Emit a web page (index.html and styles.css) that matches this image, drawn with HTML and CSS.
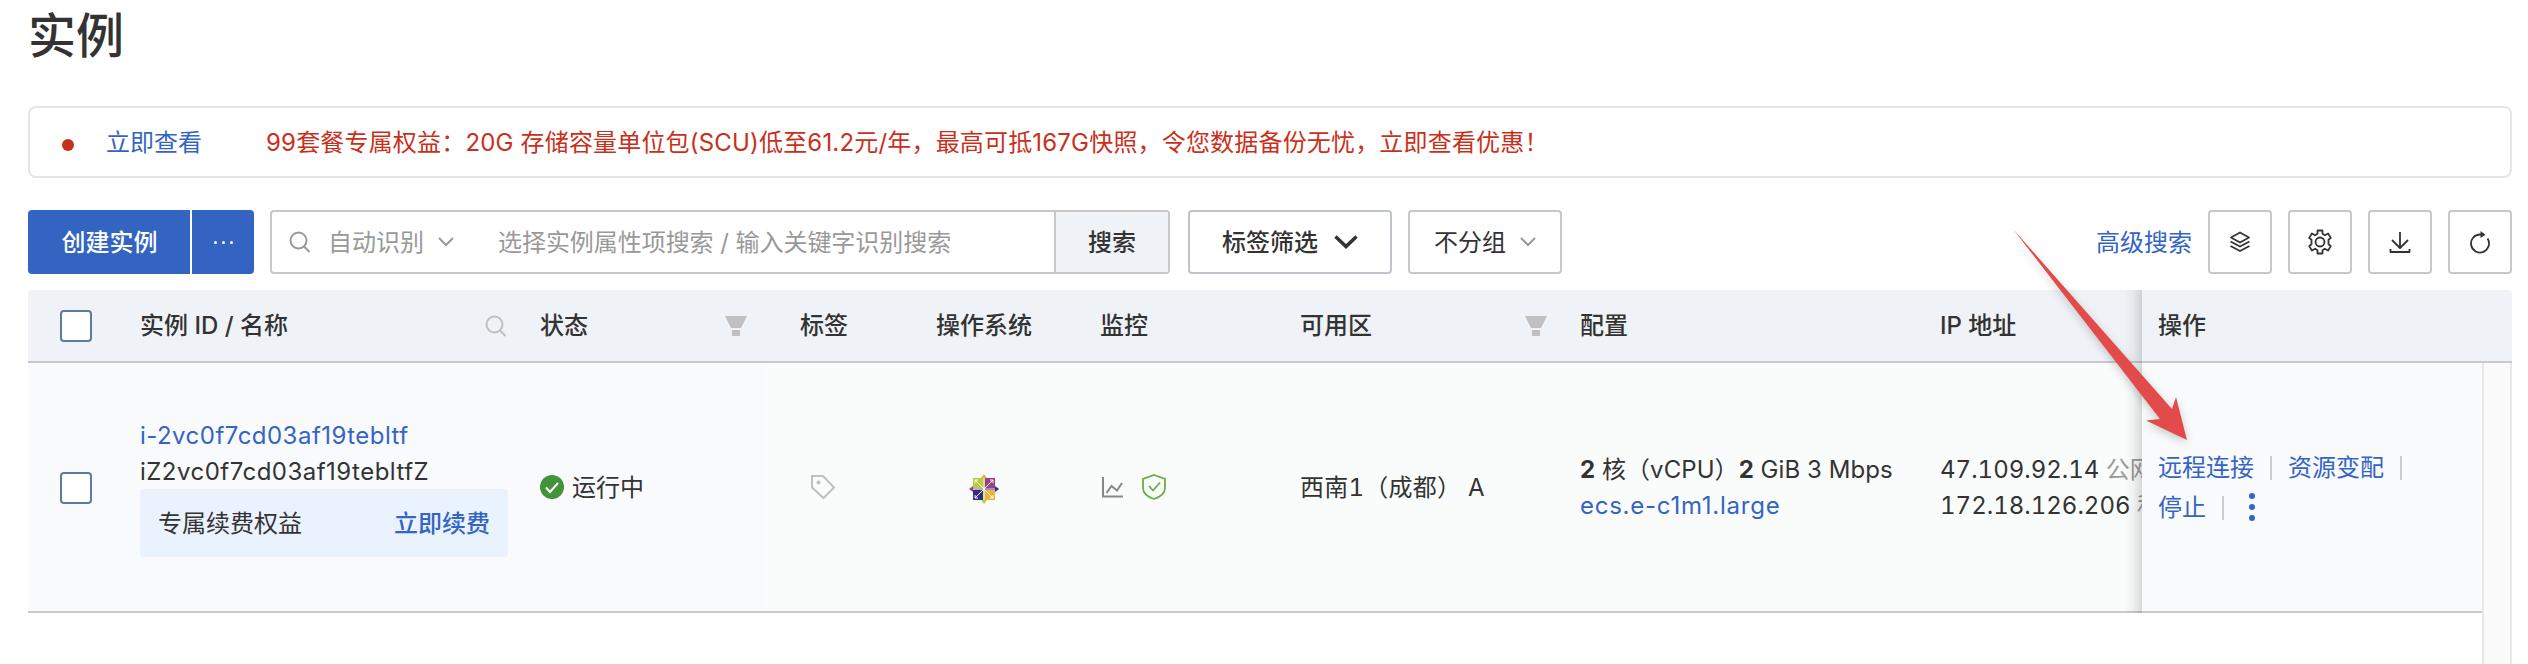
FILE: index.html
```html
<!DOCTYPE html>
<html lang="zh-CN">

<head>
    <meta charset="UTF-8">
    <meta name="viewport" content="width=device-width, initial-scale=1.0">
    <title>实例</title>
    <link rel="stylesheet" href="styles.css">
</head>

<body>
    <h1 class="title">实例</h1>

    <div class="notice">
        <span class="dot"></span>
        <a class="notice-link">立即查看</a>
        <span class="notice-text">99套餐专属权益：20G 存储容量单位包(SCU)低至61.2元/年，最高可抵167G快照，令您数据备份无忧，立即查看优惠！</span>
    </div>

    <div class="toolbar">
        <button class="btn-primary create"><span>创建实例</span></button>
        <button class="btn-primary more"><i></i><i></i><i></i></button>
        <div class="search">
            <svg class="search-icon" width="22" height="22" viewBox="0 0 22 22"><circle cx="9.5" cy="9.5" r="8" /><path d="M15 15.500l5.500 5.500" /></svg>
            <span class="search-type">自动识别</span>
            <svg class="chevron" width="16" height="10" viewBox="0 0 16 10"><path d="M1 1l7 7 7-7" /></svg>
            <span class="search-input">选择实例属性项搜索 / 输入关键字识别搜索</span>
            <button class="search-btn"><span>搜索</span></button>
        </div>
        <button class="btn tag-filter">
            <span>标签筛选</span>
            <svg width="24" height="14" viewBox="0 0 24 14"><path d="M1.500 1.500L12 11.500 22.500 1.500" /></svg>
        </button>
        <button class="btn group">
            <span>不分组</span>
            <svg class="chevron" width="16" height="10" viewBox="0 0 16 10"><path d="M1 1l7 7 7-7" /></svg>
        </button>
        <a class="advanced">高级搜索</a>
        <div class="tools">
            <button class="btn tool"><svg width="24" height="24" viewBox="0 0 24 24"><path d="M12 2.500L21 7.500 12 12.500 3 7.500zM2.500 11.500L12 16.500l9.500-5M2.500 16L12 21l9.500-5" /></svg></button>
            <button class="btn tool"><svg width="26" height="26" viewBox="0 0 26 26"><circle cx="13" cy="13" r="4.500" /><path d="M10.500 1.500h5v3.300l2.300 1.400 3.300-1.700 2.700 4.400-2.300 1.800v4.600l2.300 1.800-2.700 4.400-3.300-1.700-2.300 1.400v3.300h-5v-3.300l-2.300-1.400-3.300 1.700-2.700-4.400 2.300-1.800v-4.600L2.200 8.900l2.700-4.400 3.300 1.700 2.300-1.400z" /></svg></button>
            <button class="btn tool"><svg width="24" height="24" viewBox="0 0 24 24"><path d="M12 2v16M4 10l8 8 8-8M2.500 19v3h19v-3" /></svg></button>
            <button class="btn tool"><svg width="24" height="24" viewBox="0 0 24 24"><path d="M14 4.500h-2a9 9 0 1 0 7.500 4" /><path class="solid" d="M12.500 1l5 3.800-5 3.200z" /></svg></button>
        </div>
    </div>

    <div class="table">
        <div class="row head">
            <div class="cell c-check"><span class="checkbox"></span></div>
            <div class="cell c-id">实例 ID / 名称
                <svg class="search-icon" width="22" height="22" viewBox="0 0 22 22"><circle cx="9.500" cy="9.500" r="8" /><path d="M15 15.500l5.500 5.500" /></svg>
            </div>
            <div class="cell c-status">状态
                <svg class="filter" width="22" height="20" viewBox="0 0 22 20"><path d="M0 0h22l-6 12H6zM7 14h8v6H7z" /></svg>
            </div>
            <div class="cell c-tag">标签</div>
            <div class="cell c-os">操作系统</div>
            <div class="cell c-monitor">监控</div>
            <div class="cell c-zone">可用区
                <svg class="filter" width="22" height="20" viewBox="0 0 22 20"><path d="M0 0h22l-6 12H6zM7 14h8v6H7z" /></svg>
            </div>
            <div class="cell c-spec">配置</div>
            <div class="cell c-ip">IP 地址</div>
            <div class="cell c-action">操作</div>
        </div>
        <div class="body">
            <div class="row">
                <div class="cell c-check"><div class="checkbox"></div></div>
                <div class="cell c-id">
                    <a class="instance-id">i-2vc0f7cd03af19tebltf</a>
                    <span class="instance-id">iZ2vc0f7cd03af19tebltfZ</span>
                    <div class="renew"><span>专属续费权益</span><a>立即续费</a></div>
                </div>
                <div class="cell c-status">
                    <svg width="24" height="24" viewBox="0 0 24 24"><circle cx="12" cy="12" r="12" fill="#43933b" /><path d="M6 12.500l4 4.500 8-9" fill="none" stroke="#fff" stroke-width="2" /></svg>
                    <span>运行中</span>
                </div>
                <div class="cell c-tag">
                    <svg width="26" height="26" viewBox="0 0 26 26"><path d="M2 2h11l11 11.500L13.500 24 2 13.500z" fill="none" stroke="#c0c0c0" stroke-width="2" /><circle cx="8.500" cy="8.500" r="2" fill="#c0c0c0" /></svg>
                </div>
                <div class="cell c-os">
                    <svg width="30" height="30" viewBox="0 0 30 30">
                        <path d="M4 4h10v10H4z" fill="#b0d13c" />
                        <path d="M16 4h10v10H16z" fill="#9b3f87" />
                        <path d="M4 16h10v10H4z" fill="#2f2f85" />
                        <path d="M16 16h10v10H16z" fill="#efb03c" />
                        <path d="M14 4h2v11h-2z" fill="#ecd29a" />
                        <path d="M14 15h2v11h-2z" fill="#d9e3a0" />
                        <path d="M4 14h11v2H4z" fill="#cfa3c9" />
                        <path d="M15 14h11v2H15z" fill="#9492c4" />
                        <path d="M12 4l3-4 3 4z" fill="#eeb03c" />
                        <path d="M12 26l3 4 3-4z" fill="#b0d13c" />
                        <path d="M4 12l-4 3 4 3z" fill="#9b3f87" />
                        <path d="M26 12l4 3-4 3z" fill="#2f2f85" />
                        <path d="M6 6l18 18M24 6L6 24M6 9V6h3M21 6h3v3M6 21v3h3M24 21v3h-3" fill="none" stroke="#fff" stroke-width="1" />
                    </svg>
                </div>
                <div class="cell c-monitor">
                    <svg width="22" height="24" viewBox="0 0 22 24"><path d="M2 2v19.500H22M5.500 18l5-7 5.500 4.500 5-7.500" fill="none" stroke="#888" stroke-width="2" /></svg>
                    <svg width="24" height="26" viewBox="0 0 24 26"><path d="M12 1l11 4v9c0 5-5 9-11 11C6 23 1 19 1 14V5zM7 12l4 4.500L18 8.500" fill="none" stroke="#6fab46" stroke-width="1.800" /></svg>
                </div>
                <div class="cell c-zone"><span>西南1（成都） A</span></div>
                <div class="cell c-spec">
                    <span><b>2</b> 核（vCPU）<b>2</b> GiB 3 Mbps</span>
                    <a class="spec-type">ecs.e-c1m1.large</a>
                </div>
                <div class="cell c-ip">
                    <span>47.109.92.14 <em>公网</em></span>
                    <span>172.18.126.206 <em>私有</em></span>
                </div>
                <div class="cell c-action">
                    <div class="actions"><a>远程连接</a><s></s><a>资源变配</a><s></s></div>
                    <div class="actions"><a>停止</a><s></s><div class="dots"><i></i><i></i><i></i></div></div>
                </div>
            </div>
            <div class="scrollbar"></div>
        </div>
    </div>

    <svg class="arrow" width="200" height="230" viewBox="0 0 200 230"><path d="M13 9L172 189 176 177 187 220 146 200.500 160 199z" /></svg>
</body>

</html>
```
FILE: styles.css
```css
* {
    box-sizing: border-box;
}

body {
    margin: 0;
    padding: 0 16px 0 28px;
    height: 664px;
    overflow: hidden;
    background: #fff;
    color: #333;
    font-family: Inter, "Noto Sans CJK SC", sans-serif;
    font-size: 24px;
    line-height: 36px;
    white-space: nowrap;
}

a {
    color: #3464c4;
}

button {
    font: inherit;
    color: inherit;
    margin: 0;
    padding: 0;
}

svg {
    display: block;
    flex: none;
}

.title {
    margin: 0;
    height: 106px;
    font-size: 48px;
    font-weight: 500;
    line-height: 71px;
}

.notice {
    display: flex;
    align-items: center;
    height: 72px;
    padding-left: 32px;
    border: 2px solid #e5e5e5;
    border-radius: 8px;
}

.dot {
    width: 12px;
    height: 12px;
    margin: 6px 32px 0 0;
    border-radius: 50%;
    background: #c9301b;
}

.notice-link {
    width: 160px;
    padding-top: 2px;
}

.notice-text {
    padding-top: 2px;
    color: #c9301b;
    letter-spacing: 0.18px;
}

.toolbar {
    display: flex;
    align-items: center;
    height: 64px;
    margin: 32px 0 16px;
}

.toolbar span,
.toolbar a {
    padding-top: 2px;
}

.btn-primary {
    display: flex;
    align-items: center;
    justify-content: center;
    height: 64px;
    border: 0;
    background: #3464c2;
    color: #fff;
    font-weight: 500;
}

.create {
    width: 162px;
    margin-right: 2px;
    padding-left: 1px;
    border-radius: 4px 0 0 4px;
}

.more {
    gap: 5px;
    width: 62px;
    margin-right: 16px;
    border-radius: 0 4px 4px 0;
}

.more i {
    width: 3px;
    height: 3px;
    border-radius: 50%;
    background: #fff;
}

.search {
    display: flex;
    align-items: center;
    width: 900px;
    height: 64px;
    margin-right: 18px;
    padding-left: 17px;
    border: 2px solid #c8c8c8;
    border-radius: 4px;
    color: #999;
}

.search-icon,
.chevron {
    fill: none;
    stroke: #999;
    stroke-width: 2;
}

.search-type {
    margin: 0 14px 0 17px;
}

.search-input {
    flex: 1;
    padding-left: 44px;
    letter-spacing: -0.05px;
}

.search-btn {
    display: flex;
    align-items: center;
    justify-content: center;
    width: 114px;
    height: 60px;
    border: 0;
    border-left: 2px solid #c8c8c8;
    background: #eff3f8;
    color: #333;
    font-weight: 500;
}

.btn {
    display: flex;
    align-items: center;
    justify-content: center;
    height: 64px;
    border: 2px solid #c8c8c8;
    border-radius: 4px;
    background: #fff;
}

.tag-filter {
    gap: 16px;
    width: 204px;
    margin-right: 16px;
    border-color: #c0c5cc;
    font-weight: 500;
}

.tag-filter svg {
    fill: none;
    stroke: #333;
    stroke-width: 3.5;
}

.group {
    gap: 14px;
    width: 154px;
}

.advanced {
    margin-left: auto;
}

.tools {
    display: flex;
    gap: 16px;
    margin-left: 16px;
}

.tool {
    width: 64px;
}

.tool svg {
    fill: none;
    stroke: #333;
    stroke-width: 1.8;
    stroke-linejoin: round;
}

.tool .solid {
    fill: #333;
    stroke: none;
}

.row {
    display: flex;
    width: 2454px;
    height: 250px;
    border-bottom: 2px solid #c8cacc;
}

.head {
    width: 100%;
    height: 73px;
    border-radius: 4px 4px 0 0;
    background: #eff3f8;
    font-weight: 500;
}

.cell {
    display: flex;
    align-items: center;
    flex: none;
    background: #fafcfb;
}

.head .cell {
    padding-top: 1px;
    background: none;
}

.body .cell > span,
.body .cell > a,
.renew span,
.renew a,
.actions a {
    height: 36px;
    line-height: 38px;
}

.body .c-check,
.body .c-id,
.body .c-status {
    background: #f9fafc;
}

.c-check {
    width: 112px;
    padding-left: 32px;
}

.checkbox {
    width: 32px;
    height: 32px;
    border: 2px solid #5d7b9f;
    border-radius: 4px;
    background: #fff;
}

.body .checkbox {
    margin-top: 2px;
}

.c-id {
    width: 400px;
    padding-right: 33px;
    justify-content: space-between;
}

.c-id .search-icon {
    stroke: #c0c0c0;
}

.body .c-id {
    flex-direction: column;
    align-items: flex-start;
    justify-content: center;
    padding-right: 0;
}

.instance-id {
    letter-spacing: 0.48px;
}

.renew {
    display: flex;
    justify-content: space-between;
    align-items: center;
    width: 368px;
    height: 68px;
    padding: 0 18px;
    border-radius: 4px;
    background: #eaf2fe;
}

.renew a {
    font-weight: 500;
}

.c-status {
    gap: 8px;
    width: 224px;
}

.head .c-status,
.head .c-zone {
    justify-content: space-between;
    padding-right: 17px;
}

.filter {
    fill: #c0c0c0;
}

.c-tag {
    width: 172px;
    padding-left: 36px;
}

.body .c-tag {
    padding-left: 46px;
}

.c-os {
    width: 164px;
}

.body .c-os {
    padding: 3px 0 0 33px;
}

.c-monitor {
    gap: 19px;
    width: 200px;
}

.body .c-monitor {
    padding-left: 1px;
}

.c-zone {
    width: 280px;
}

.head .c-zone {
    padding-right: 33px;
}

.body .c-zone {
    font-variant-numeric: tabular-nums;
    letter-spacing: 0.25px;
}

.c-spec {
    width: 360px;
    letter-spacing: 0.06px;
}

.spec-type {
    letter-spacing: 0.75px;
}

.body .c-spec,
.body .c-ip {
    flex-direction: column;
    align-items: flex-start;
    justify-content: center;
}

.c-ip {
    width: 202px;
    overflow: hidden;
}

.body .c-ip {
    font-variant-numeric: tabular-nums;
}

.c-ip em {
    color: #999;
    font-style: normal;
}

.c-action {
    position: relative;
    width: 340px;
    padding-left: 16px;
    background: #f9fafc;
}

.c-action::before {
    content: "";
    position: absolute;
    top: 0;
    bottom: -2px;
    left: -18px;
    width: 18px;
    background: linear-gradient(to right, rgba(0, 0, 0, 0), rgba(0, 0, 0, 0.04) 50%, rgba(0, 0, 0, 0.14));
}

.body .c-action {
    flex-direction: column;
    align-items: flex-start;
    justify-content: center;
    gap: 4px;
}

.actions {
    display: flex;
    align-items: center;
}

.actions s {
    width: 2px;
    height: 24px;
    margin: 2px 16px 0;
    background: #ccc;
}

.dots {
    display: flex;
    flex-direction: column;
    gap: 5px;
    margin-left: 9px;
}

.dots i {
    width: 6px;
    height: 6px;
    border-radius: 50%;
    background: #3464c4;
}

.body {
    display: flex;
    height: 301px;
}

.scrollbar {
    width: 30px;
    border: solid #e8e8e8;
    border-width: 0 2px;
    background: #fafafa;
}

.arrow {
    position: absolute;
    left: 2000px;
    top: 220px;
    fill: #e34a4a;
    filter: drop-shadow(0 3px 4px rgba(0, 0, 0, 0.2));
}
```
